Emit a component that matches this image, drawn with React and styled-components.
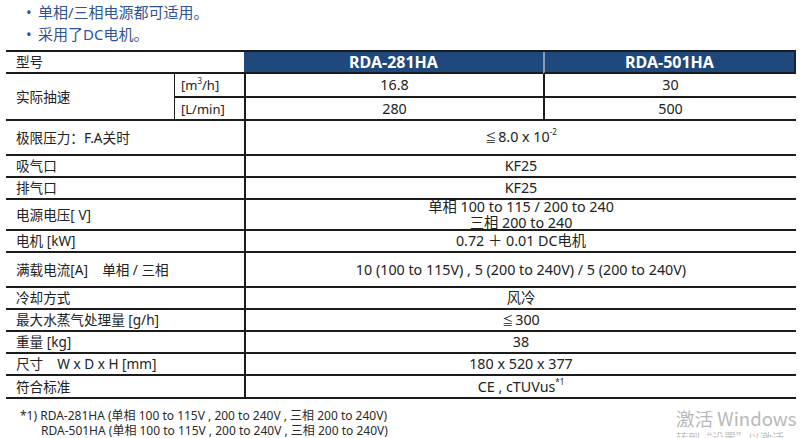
import React from "react";
import styled, { createGlobalStyle } from "styled-components";

const Global = createGlobalStyle`
  html, body { margin: 0; padding: 0; background: #fff; }
  body {
    font-family: "Noto Sans", "Noto Sans CJK SC", sans-serif;
    color: #222;
    width: 812px;
    height: 438px;
    overflow: hidden;
    position: relative;
  }
`;

const Page = styled.div`
  position: relative;
  width: 812px;
  height: 438px;
  overflow: hidden;
`;

const Bullets = styled.ul`
  list-style: none;
  margin: 0 0 5px 0;
  padding: 1px 0 0 26px;
  font-size: 15px;
  line-height: 22px;
  color: #2f5496;
`;

const Bullet = styled.li`
  display: flex;
  gap: 6px;
  &::before {
    content: "•";
    width: 6px;
  }
`;

const Grid = styled.div`
  margin-left: 6px;
  width: 790px;
  display: grid;
  grid-template-columns: 168px 70px 299px 253px;
  grid-template-rows: 22px 24px 23px 35px 22px 22px 31px 22px 35px 22px 22px 22px 22px 23px;
  border-top: 2px solid #1c1c1c;
  font-size: 13px;
`;

const Cell = styled.div`
  box-sizing: border-box;
  display: flex;
  flex-direction: column;
  justify-content: center;
  align-items: ${(p) => (p.$center ? "center" : "flex-start")};
  text-align: ${(p) => (p.$center ? "center" : "left")};
  padding-left: ${(p) => (p.$center ? 0 : p.$unit ? "6px" : "10px")};
  border-bottom: 2px solid #1c1c1c;
  border-left: ${(p) => (p.$vline ? `${p.$vline}px solid #1c1c1c` : "none")};
  grid-column: ${(p) => p.$col || "auto"};
  grid-row: ${(p) => p.$row || "auto"};
  font-size: ${(p) => (p.$center ? "14.3px" : p.$unit ? "13px" : "13.6px")};
  line-height: 16px;
  white-space: pre;
`;

const HeadCell = styled(Cell)`
  background: #1f487c;
  color: #fff;
  font-weight: 700;
  font-size: 16px;
  border-left: ${(p) => (p.$divider ? "2px solid #8b9db6" : "none")};
  border-right: ${(p) => (p.$edge ? "2px solid #0f2440" : "none")};
`;

const Sup = styled.sup`
  font-size: 8px;
  line-height: 0;
  position: relative;
  top: -1px;
`;

const Le = styled.span`
  font-size: 11px;
  margin-right: 2px;
`;

const Footnote = styled.div`
  margin: 9px 0 0 20px;
  font-size: 12px;
  line-height: 15px;
  color: #2a2a2a;
`;

const FootLine = styled.div`
  padding-left: ${(p) => (p.$indent ? "21px" : "0")};
  white-space: pre;
`;

const Watermark = styled.div`
  position: absolute;
  left: 676px;
  top: 406px;
  color: #b8b8b8;
  font-family: "Noto Sans CJK SC", "Noto Sans", sans-serif;
`;

const WmTitle = styled.div`
  font-size: 18.6px;
  line-height: 24px;
`;

const WmSub = styled.div`
  font-size: 12px;
  line-height: 16px;
  color: #c4c4c4;
`;

const rows = [
  { label: "极限压力：F.A关时", value: <><Le>≦</Le>8.0 x 10<Sup>-2</Sup></> },
  { label: "吸气口", value: "KF25" },
  { label: "排气口", value: "KF25" },
  { label: "电源电压[ V]", value: ["单相 100 to 115 / 200 to 240", "三相 200 to 240"] },
  { label: "电机 [kW]", value: "0.72 ＋ 0.01 DC电机" },
  { label: "满载电流[A]    单相 / 三相", value: "10 (100 to 115V) , 5 (200 to 240V) / 5 (200 to 240V)" },
  { label: "冷却方式", value: "风冷" },
  { label: "最大水蒸气处理量 [g/h]", value: <><Le>≦</Le>300</> },
  { label: "重量 [kg]", value: "38" },
  { label: "尺寸    W x D x H [mm]", value: "180 x 520 x 377" },
  { label: "符合标准", value: <>CE , cTUVus<Sup>*1</Sup></> },
];

export default function App() {
  return (
    <Page>
      <Global />
      <Bullets>
        <Bullet>单相/三相电源都可适用。</Bullet>
        <Bullet>采用了DC电机。</Bullet>
      </Bullets>
      <Grid>
        <Cell $col="1 / 3">型号</Cell>
        <HeadCell $center>RDA-281HA</HeadCell>
        <HeadCell $center $divider $edge>RDA-501HA</HeadCell>

        <Cell $col="1" $row="2 / 4">实际抽速</Cell>
        <Cell $unit $vline={1}><span>[m<Sup>3</Sup>/h]</span></Cell>
        <Cell $center $vline={2}>16.8</Cell>
        <Cell $center $vline={2}>30</Cell>
        <Cell $unit $vline={1}><span>[L/min]</span></Cell>
        <Cell $center $vline={2}>280</Cell>
        <Cell $center $vline={2}>500</Cell>

        {rows.map((r, i) => (
          <React.Fragment key={i}>
            <Cell $col="1 / 3">{r.label}</Cell>
            <Cell $col="3 / 5" $center $vline={2}>
              {Array.isArray(r.value)
                ? r.value.map((v, j) => <div key={j}>{v}</div>)
                : <div>{r.value}</div>}
            </Cell>
          </React.Fragment>
        ))}
      </Grid>
      <Footnote>
        <FootLine>*1) RDA-281HA (单相 100 to 115V , 200 to 240V , 三相 200 to 240V)</FootLine>
        <FootLine $indent>RDA-501HA (单相 100 to 115V , 200 to 240V , 三相 200 to 240V)</FootLine>
      </Footnote>
      <Watermark>
        <WmTitle>激活 Windows</WmTitle>
        <WmSub>转到“设置”以激活 Windows。</WmSub>
      </Watermark>
    </Page>
  );
}
